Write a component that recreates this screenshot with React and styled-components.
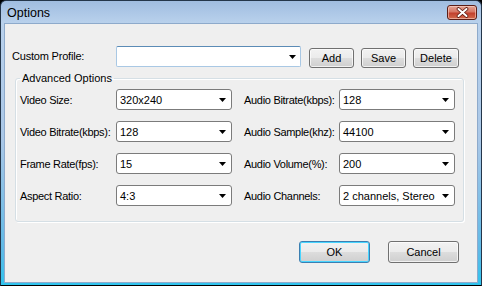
import React from "react";
import styled, { createGlobalStyle } from "styled-components";

const Global = createGlobalStyle`
  html, body { margin: 0; padding: 0; background: #000; }
  body { font-family: "Liberation Sans", Arial, sans-serif; font-size: 11px; color: #000; }
  * { box-sizing: border-box; }
`;

const Window = styled.div`
  width: 482px;
  height: 286px;
  display: flex;
  flex-direction: column;
  border: 1px solid #24364a;
  border-bottom-color: #000;
  border-radius: 6px 6px 0 0;
  background: linear-gradient(to bottom, #a0bde0 0px, #b9d1ec 22px, #a9c7e7 140px, #5fb9e6 250px, #2fc4ee 284px);
  padding: 0 3px 2px 3px;
  overflow: hidden;
`;

const TitleBar = styled.div`
  height: 22px;
  flex: none;
  display: flex;
  align-items: center;
  justify-content: space-between;
  padding: 0 1px 0 3px;
`;

const Title = styled.span`
  font-size: 12.5px;
  color: #000;
  padding-top: 1px;
`;

const CloseButton = styled.div`
  width: 30px;
  height: 15px;
  margin-top: 1px;
  border: 1px solid #5c1e16;
  border-radius: 3px;
  background: linear-gradient(to bottom, #e4a594 0%, #d67664 45%, #c2402d 55%, #d26a4c 100%);
  box-shadow: inset 0 0 0 1px rgba(255, 220, 210, 0.55);
  display: flex;
  align-items: center;
  justify-content: center;
`;

const Body = styled.div`
  flex: 1;
  background: #efefef;
  border: 1px solid #8eaacb;
  padding: 22px 0 0 7px;
  display: flex;
  flex-direction: column;
`;

const TopRow = styled.div`
  display: flex;
  align-items: flex-start;
  height: 23px;
`;

const TopLabel = styled.span`
  width: 104px;
  padding-top: 4px;
  letter-spacing: -0.2px;
`;

const ProfileInput = styled.div`
  width: 185px;
  height: 21px;
  background: #fff;
  border: 1px solid #a9c8e4;
  border-top-color: #5b8bb6;
  border-radius: 2px;
  display: flex;
  align-items: center;
  justify-content: flex-end;
  padding-right: 4px;
  margin-right: 8px;
`;

const Button = styled.button`
  width: ${(p) => p.$w}px;
  height: ${(p) => p.$h || 20}px;
  margin-top: ${(p) => p.$mt || 0}px;
  margin-right: ${(p) => p.$mr || 0}px;
  font-family: "Liberation Sans", Arial, sans-serif;
  font-size: 11px;
  color: #000;
  padding: 0;
  border: 1px solid ${(p) => (p.$default ? "#3c7fb1" : "#707070")};
  border-radius: 3px;
  background: linear-gradient(to bottom, #f2f2f2 0%, #ebebeb 50%, #dddddd 51%, #cfcfcf 100%);
  box-shadow: inset 0 0 0 1px ${(p) => (p.$default ? "#48d5ff" : "rgba(255,255,255,0.7)")};
`;

const Group = styled.fieldset`
  width: 449px;
  margin: 3px 0 0 3px;
  padding: 4px 8px 15px 4px;
  border: 1px solid #d5dfe5;
  border-radius: 3px;
  box-shadow: inset 1px 1px 0 #fff, 1px 1px 0 #fff;
`;

const Legend = styled.legend`
  padding: 0 2px;
  line-height: 13px;
  font-size: 11px;
`;

const Grid = styled.div`
  display: grid;
  grid-template-columns: 96px 116px 107px 116px;
  row-gap: 11px;
  & > :nth-child(4n + 3) {
    padding-left: 12px;
  }
`;

const FieldLabel = styled.span`
  display: flex;
  align-items: center;
  height: 21px;
  white-space: nowrap;
  letter-spacing: -0.3px;
`;

const Combo = styled.div`
  height: 21px;
  background: #fff;
  border: 1px solid #7b7b7b;
  border-radius: 3px;
  display: flex;
  align-items: center;
  justify-content: space-between;
  padding: 1px 5px 0 3px;
  font-size: 11px;
`;

const Footer = styled.div`
  display: flex;
  justify-content: flex-end;
  padding-right: 18px;
  margin-top: 19px;
  gap: 18px;
`;

const Arrow = () => (
  <svg width="7" height="4" viewBox="0 0 7 4">
    <polygon points="0,0 7,0 3.5,4" fill="#000" />
  </svg>
);

const CloseX = () => (
  <svg width="13" height="11" viewBox="0 0 13 11">
    <path d="M2.5 2 L10.5 9 M10.5 2 L2.5 9" stroke="#5a1a10" strokeWidth="3.6" strokeLinecap="round" />
    <path d="M2.5 2 L10.5 9 M10.5 2 L2.5 9" stroke="#fff" strokeWidth="2" strokeLinecap="round" />
  </svg>
);

const fields = [
  ["Video Size:", "320x240", "Audio Bitrate(kbps):", "128"],
  ["Video Bitrate(kbps):", "128", "Audio Sample(khz):", "44100"],
  ["Frame Rate(fps):", "15", "Audio Volume(%):", "200"],
  ["Aspect Ratio:", "4:3", "Audio Channels:", "2 channels, Stereo"],
];

export default function App() {
  return (
    <>
      <Global />
      <Window>
        <TitleBar>
          <Title>Options</Title>
          <CloseButton>
            <CloseX />
          </CloseButton>
        </TitleBar>
        <Body>
          <TopRow>
            <TopLabel>Custom Profile:</TopLabel>
            <ProfileInput>
              <Arrow />
            </ProfileInput>
            <Button $w={45} $mt={2} $mr={7}>Add</Button>
            <Button $w={45} $mt={2} $mr={7}>Save</Button>
            <Button $w={46} $mt={2}>Delete</Button>
          </TopRow>
          <Group>
            <Legend>Advanced Options</Legend>
            <Grid>
              {fields.map(([l1, v1, l2, v2]) => (
                <React.Fragment key={l1}>
                  <FieldLabel>{l1}</FieldLabel>
                  <Combo>
                    <span>{v1}</span>
                    <Arrow />
                  </Combo>
                  <FieldLabel>{l2}</FieldLabel>
                  <Combo>
                    <span>{v2}</span>
                    <Arrow />
                  </Combo>
                </React.Fragment>
              ))}
            </Grid>
          </Group>
          <Footer>
            <Button $w={71} $h={22} $default>OK</Button>
            <Button $w={71} $h={22}>Cancel</Button>
          </Footer>
        </Body>
      </Window>
    </>
  );
}
